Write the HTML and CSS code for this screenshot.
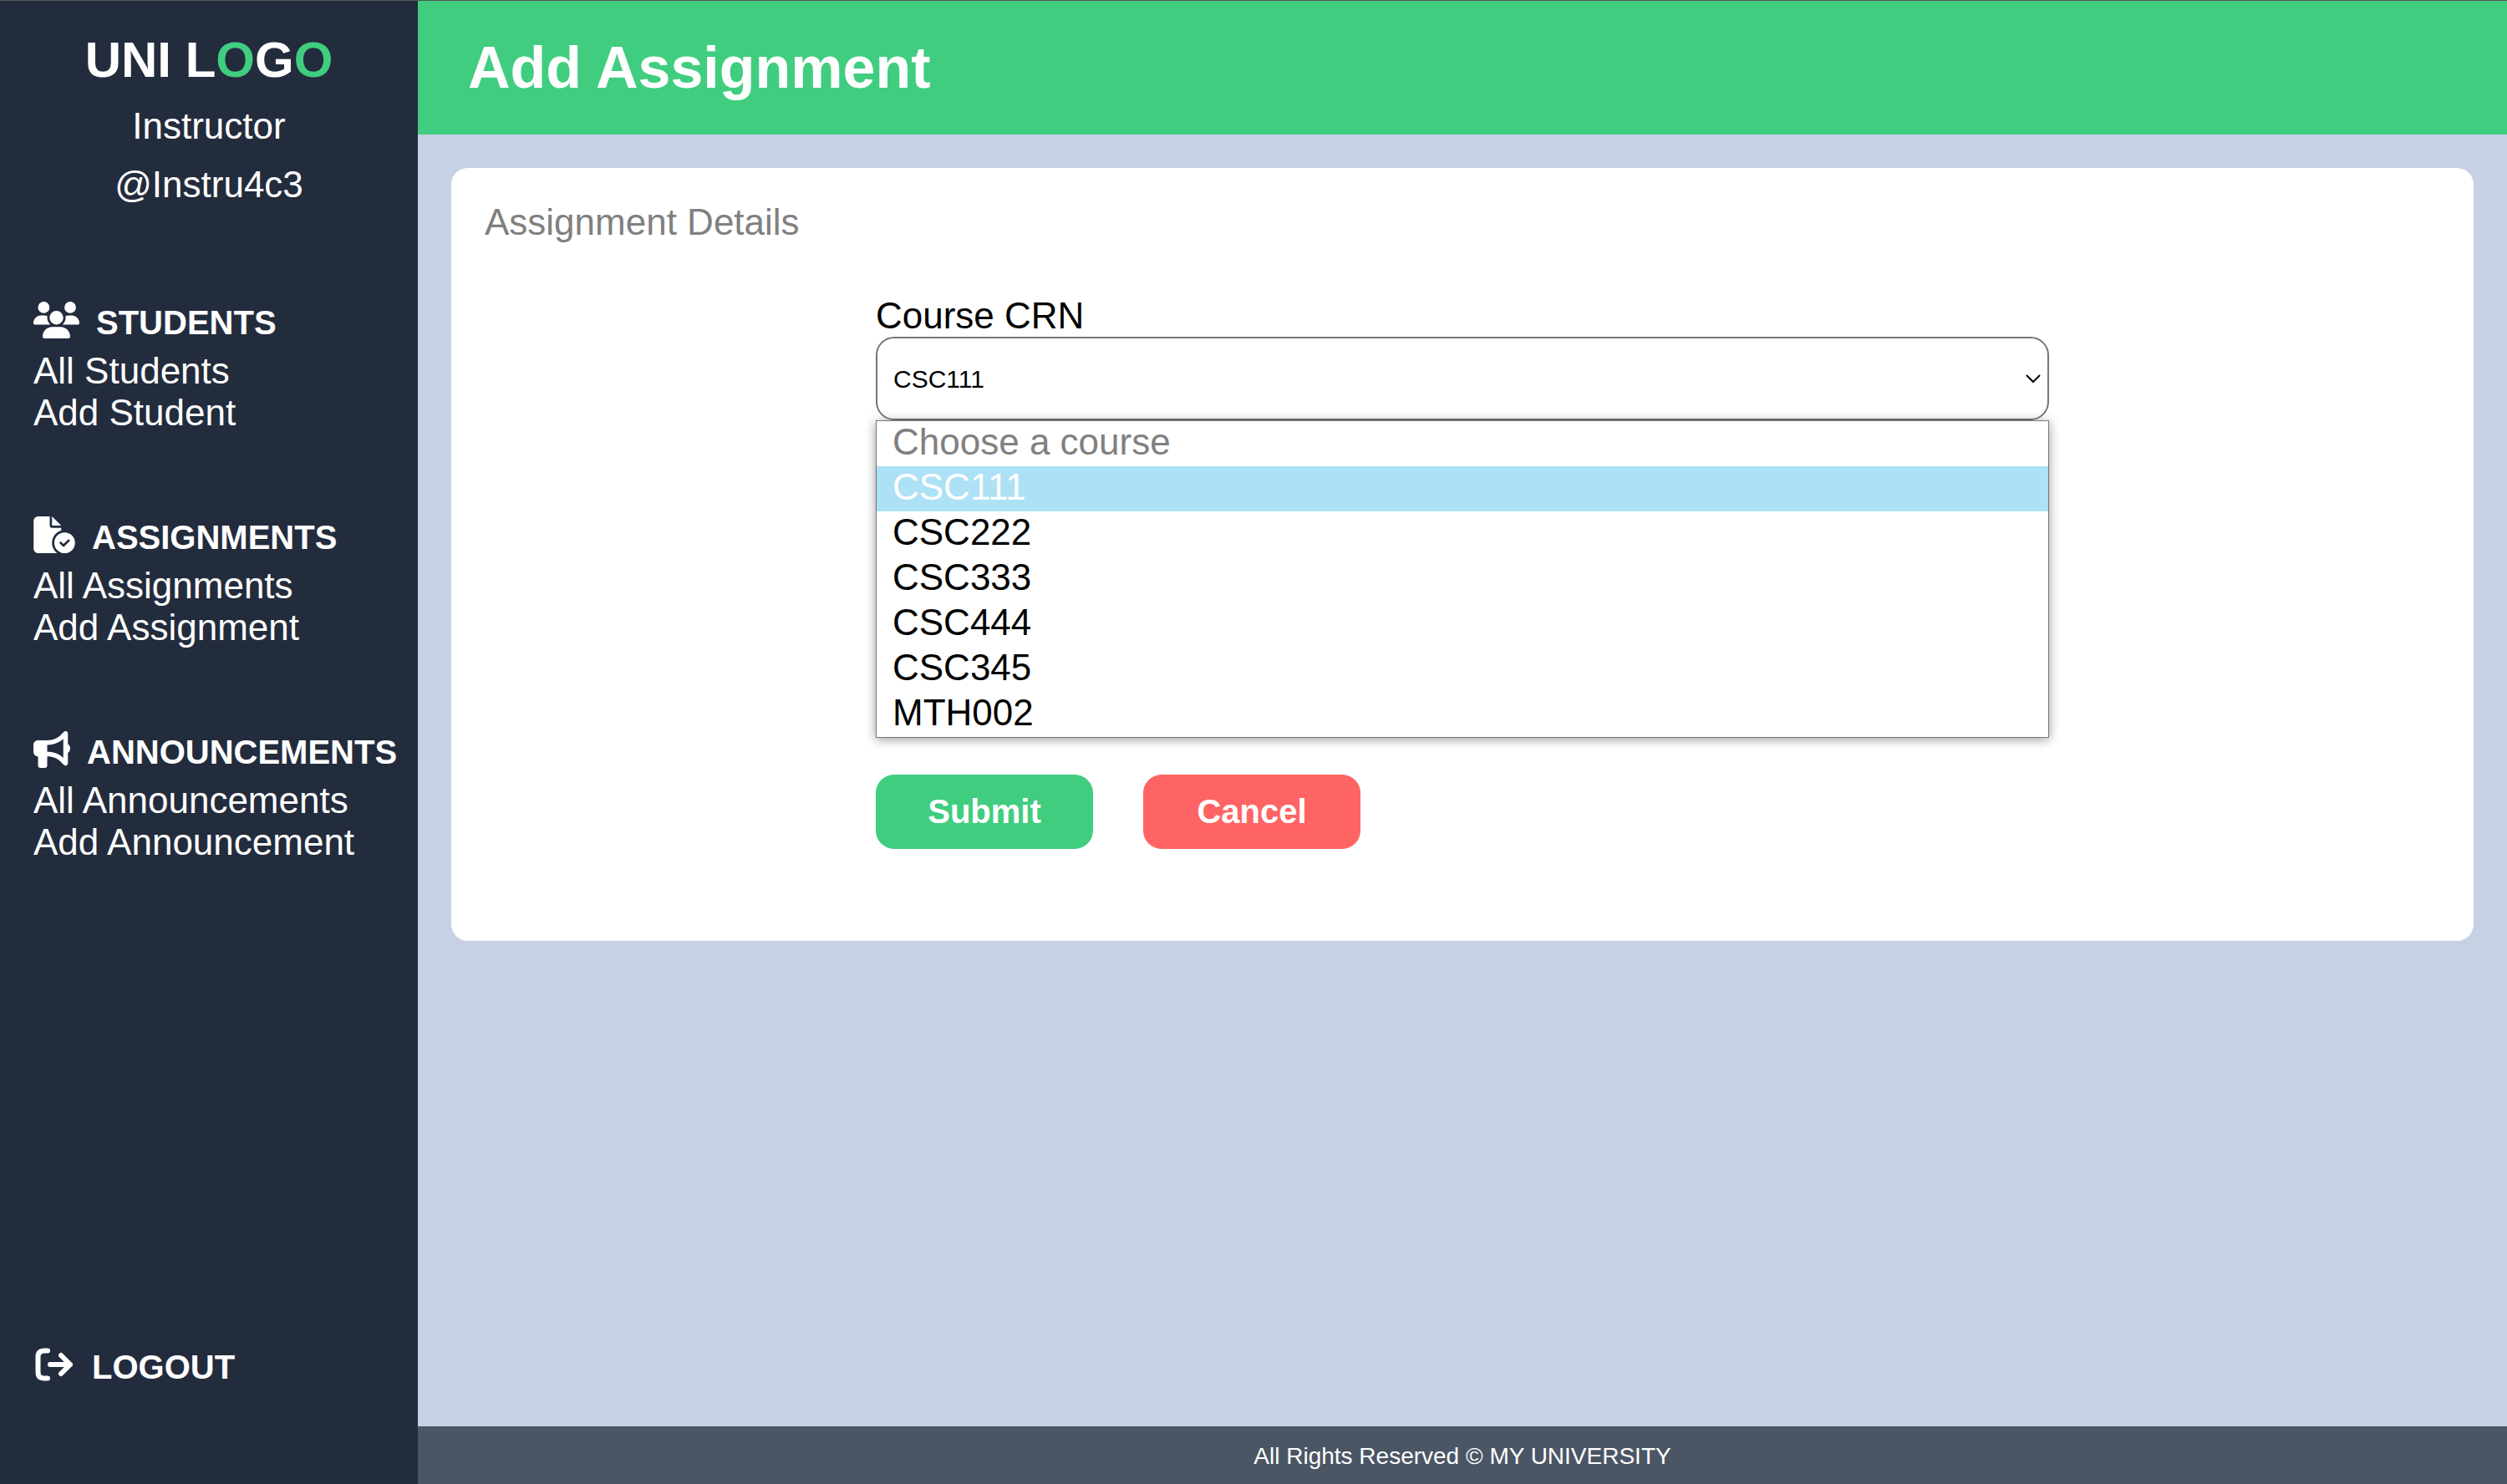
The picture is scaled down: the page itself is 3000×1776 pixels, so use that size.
FILE: index.html
```html
<!DOCTYPE html>
<html lang="en">
<head>
<meta charset="utf-8">
<title>Add Assignment</title>
<link rel="stylesheet" href="styles.css">
</head>
<body>
<div class="app">
  <aside class="sidebar">
    <div class="logo">UNI L<span class="accent">O</span>G<span class="accent">O</span></div>
    <p class="user">Instructor</p>
    <p class="user">@Instru4c3</p>
    <nav class="menu">
      <section class="group">
        <h2 class="group-title"><svg class="icon icon-users" viewBox="0 0 640 512" aria-hidden="true"><path d="M144 0a80 80 0 1 1 0 160A80 80 0 1 1 144 0zM512 0a80 80 0 1 1 0 160A80 80 0 1 1 512 0zM0 298.7C0 239.8 47.8 192 106.7 192h42.7c15.9 0 31 3.5 44.6 9.7c-1.3 7.2-1.9 14.7-1.9 22.3c0 38.2 16.8 72.5 43.3 96c-.2 0-.4 0-.7 0H21.3C9.6 320 0 310.4 0 298.7zM405.3 320c-.2 0-.4 0-.7 0c26.6-23.5 43.3-57.8 43.3-96c0-7.6-.7-15-1.9-22.3c13.6-6.3 28.7-9.7 44.6-9.7h42.7C592.2 192 640 239.8 640 298.7c0 11.8-9.6 21.3-21.3 21.3H405.3zM224 224a96 96 0 1 1 192 0 96 96 0 1 1 -192 0zM128 485.3C128 411.7 187.7 352 261.3 352H378.7C452.3 352 512 411.7 512 485.3c0 14.7-11.9 26.7-26.7 26.7H154.7c-14.7 0-26.7-11.9-26.7-26.7z"/></svg>STUDENTS</h2>
        <a class="link" href="#">All Students</a>
        <a class="link" href="#">Add Student</a>
      </section>
      <section class="group">
        <h2 class="group-title"><svg class="icon icon-file" viewBox="0 0 576 512" aria-hidden="true"><path d="M0 64C0 28.7 28.7 0 64 0H224V128c0 17.7 14.3 32 32 32H384v38.6C310.1 219.5 256 287.4 256 368c0 59.1 29.1 111.3 73.7 143.3c-3.2 .5-6.4 .7-9.7 .7H64c-35.3 0-64-28.7-64-64V64zm384 64H256V0L384 128zM288 368a144 144 0 1 1 288 0 144 144 0 1 1 -288 0zm211.3-43.3c-6.2-6.2-16.4-6.2-22.6 0L416 385.4l-28.7-28.7c-6.2-6.2-16.4-6.2-22.6 0s-6.2 16.4 0 22.6l40 40c6.2 6.2 16.4 6.2 22.6 0l72-72c6.2-6.2 6.2-16.4 0-22.6z"/></svg>ASSIGNMENTS</h2>
        <a class="link" href="#">All Assignments</a>
        <a class="link" href="#">Add Assignment</a>
      </section>
      <section class="group">
        <h2 class="group-title"><svg class="icon icon-horn" viewBox="0 0 512 512" aria-hidden="true"><path d="M480 32c0-12.9-7.8-24.6-19.8-29.6s-25.7-2.2-34.9 6.9L381.7 53c-48 48-113.1 75-181 75H192 160 64c-35.3 0-64 28.7-64 64v96c0 35.3 28.7 64 64 64l0 128c0 17.7 14.3 32 32 32h64c17.7 0 32-14.3 32-32V352l8.7 0c67.9 0 133 27 181 75l43.6 43.6c9.2 9.2 22.9 11.9 34.9 6.9s19.8-16.6 19.8-29.6V300.4c18.6-8.8 32-32.5 32-60.4s-13.4-51.6-32-60.4V32zm-64 76.7V240 371.3C357.2 317.8 280.5 288 200.7 288H192V192h8.7c79.8 0 156.5-29.8 215.3-83.3z"/></svg>ANNOUNCEMENTS</h2>
        <a class="link" href="#">All Announcements</a>
        <a class="link" href="#">Add Announcement</a>
      </section>
    </nav>
    <a class="logout" href="#"><svg class="icon icon-logout" viewBox="0 0 50 44" aria-hidden="true"><path d="M17 5.5H13Q5.500 5.500 5.500 13V31Q5.500 38.500 13 38.500H17M20 22H44M33 11L44 22L33 33"/></svg>LOGOUT</a>
  </aside>

  <div class="page">
    <header class="header"><h1 class="title">Add Assignment</h1></header>
    <main class="content">
      <section class="card">
        <h2 class="card-title">Assignment Details</h2>
        <form class="form">
          <label class="label" for="crn">Course CRN</label>
          <div class="picker">
            <select class="select" id="crn">
              <option disabled>Choose a course</option>
              <option selected>CSC111</option>
              <option>CSC222</option>
              <option>CSC333</option>
              <option>CSC444</option>
              <option>CSC345</option>
              <option>MTH002</option>
            </select>
            <svg class="chevron" viewBox="0 0 18 12" aria-hidden="true"><path d="M1 2L9 10L17 2"/></svg>
            <ul class="options" role="listbox" aria-label="Course CRN">
              <li class="option option-disabled" role="option" aria-disabled="true">Choose a course</li>
              <li class="option option-active" role="option" aria-selected="true">CSC111</li>
              <li class="option" role="option">CSC222</li>
              <li class="option" role="option">CSC333</li>
              <li class="option" role="option">CSC444</li>
              <li class="option" role="option">CSC345</li>
              <li class="option" role="option">MTH002</li>
            </ul>
          </div>
          <div class="actions">
            <button class="button button-submit" type="submit">Submit</button>
            <button class="button button-cancel" type="button">Cancel</button>
          </div>
        </form>
      </section>
    </main>
    <footer class="footer">All Rights Reserved © MY UNIVERSITY</footer>
  </div>
</div>
</body>
</html>
```

FILE: styles.css
```css
* {
  box-sizing: border-box;
  margin: 0;
  padding: 0;
}

body {
  font-family: "Liberation Sans", Arial, sans-serif;
  font-size: 44px;
  line-height: 50px;
  color: #000;
}

.app {
  display: flex;
  min-height: 100vh;
  border-top: 1px solid #555;
  background: #c7d1e4;
}

/* Sidebar */
.sidebar {
  display: flex;
  flex-direction: column;
  flex: 0 0 500px;
  padding: 37px 0 115px;
  background: #232c3d;
  color: #fff;
}

.logo {
  margin-bottom: 20px;
  font-size: 60px;
  font-weight: bold;
  line-height: 68px;
  text-align: center;
}

.accent {
  color: #40cd7f;
}

.user {
  margin-bottom: 20px;
  text-align: center;
}

.menu {
  display: flex;
  flex-direction: column;
  gap: 99px;
  margin-top: 95px;
  padding-left: 40px;
}

.group {
  display: flex;
  flex-direction: column;
}

.group-title {
  height: 50px;
  margin-bottom: 8px;
  font-size: 40px;
  white-space: nowrap;
}

.link {
  color: inherit;
  text-decoration: none;
}

.logout {
  height: 50px;
  margin-top: auto;
  padding-left: 40px;
  color: inherit;
  font-size: 40px;
  font-weight: bold;
  text-decoration: none;
}

.icon {
  height: 44px;
  margin-right: 20px;
  vertical-align: -5px;
  fill: currentColor;
}

.icon-users {
  width: 55px;
}

.icon-file {
  width: 50px;
}

.icon-horn {
  width: 44px;
}

.icon-logout {
  width: 50px;
  fill: none;
  stroke: currentColor;
  stroke-width: 6;
  stroke-linecap: round;
  stroke-linejoin: round;
}

/* Page */
.page {
  display: flex;
  flex: 1;
  flex-direction: column;
}

.header {
  padding: 40px 60px;
  background: #40cd7f;
  color: #fff;
}

.title {
  font-size: 70px;
  line-height: 80px;
}

.content {
  flex: 1;
  padding: 40px;
}

.card {
  padding: 40px 40px 110px;
  border-radius: 20px;
  background: #fff;
}

.card-title {
  margin-bottom: 62px;
  color: gray;
  font-size: 44px;
  font-weight: normal;
}

.form {
  width: 60%;
  margin: 0 auto;
}

.label {
  display: block;
}

.picker {
  position: relative;
}

.select {
  display: block;
  width: 100%;
  height: 100px;
  padding: 0 19px;
  border: 2px solid #767676;
  border-radius: 22px;
  appearance: none;
  background: #fff;
  color: #000;
  font: 30px "Liberation Sans", Arial, sans-serif;
}

.chevron {
  position: absolute;
  top: 44px;
  right: 10px;
  width: 18px;
  height: 12px;
  fill: none;
  stroke: #000;
  stroke-width: 2;
}

.options {
  position: absolute;
  top: 100%;
  left: 0;
  width: 100%;
  border: 1px solid #767676;
  background: #fff;
  box-shadow: 0 2px 12px rgba(0, 0, 0, 0.4);
  list-style: none;
}

.option {
  height: 54px;
  padding-left: 19px;
}

.option-disabled {
  color: gray;
}

.option-active {
  background: #ade1f6;
  color: #fff;
}

.actions {
  display: flex;
  gap: 60px;
  margin-top: 424px;
}

.button {
  width: 260px;
  padding: 19px 0 20px;
  border: 0;
  border-radius: 22px;
  color: #fff;
  font: bold 40px/50px "Liberation Sans", Arial, sans-serif;
}

.button-submit {
  background: #40cd7f;
}

.button-cancel {
  background: #ff6464;
}

.footer {
  padding: 20px 20px 17px;
  background: #4b5665;
  color: #fff;
  font-size: 28px;
  line-height: 32px;
  text-align: center;
}
```
